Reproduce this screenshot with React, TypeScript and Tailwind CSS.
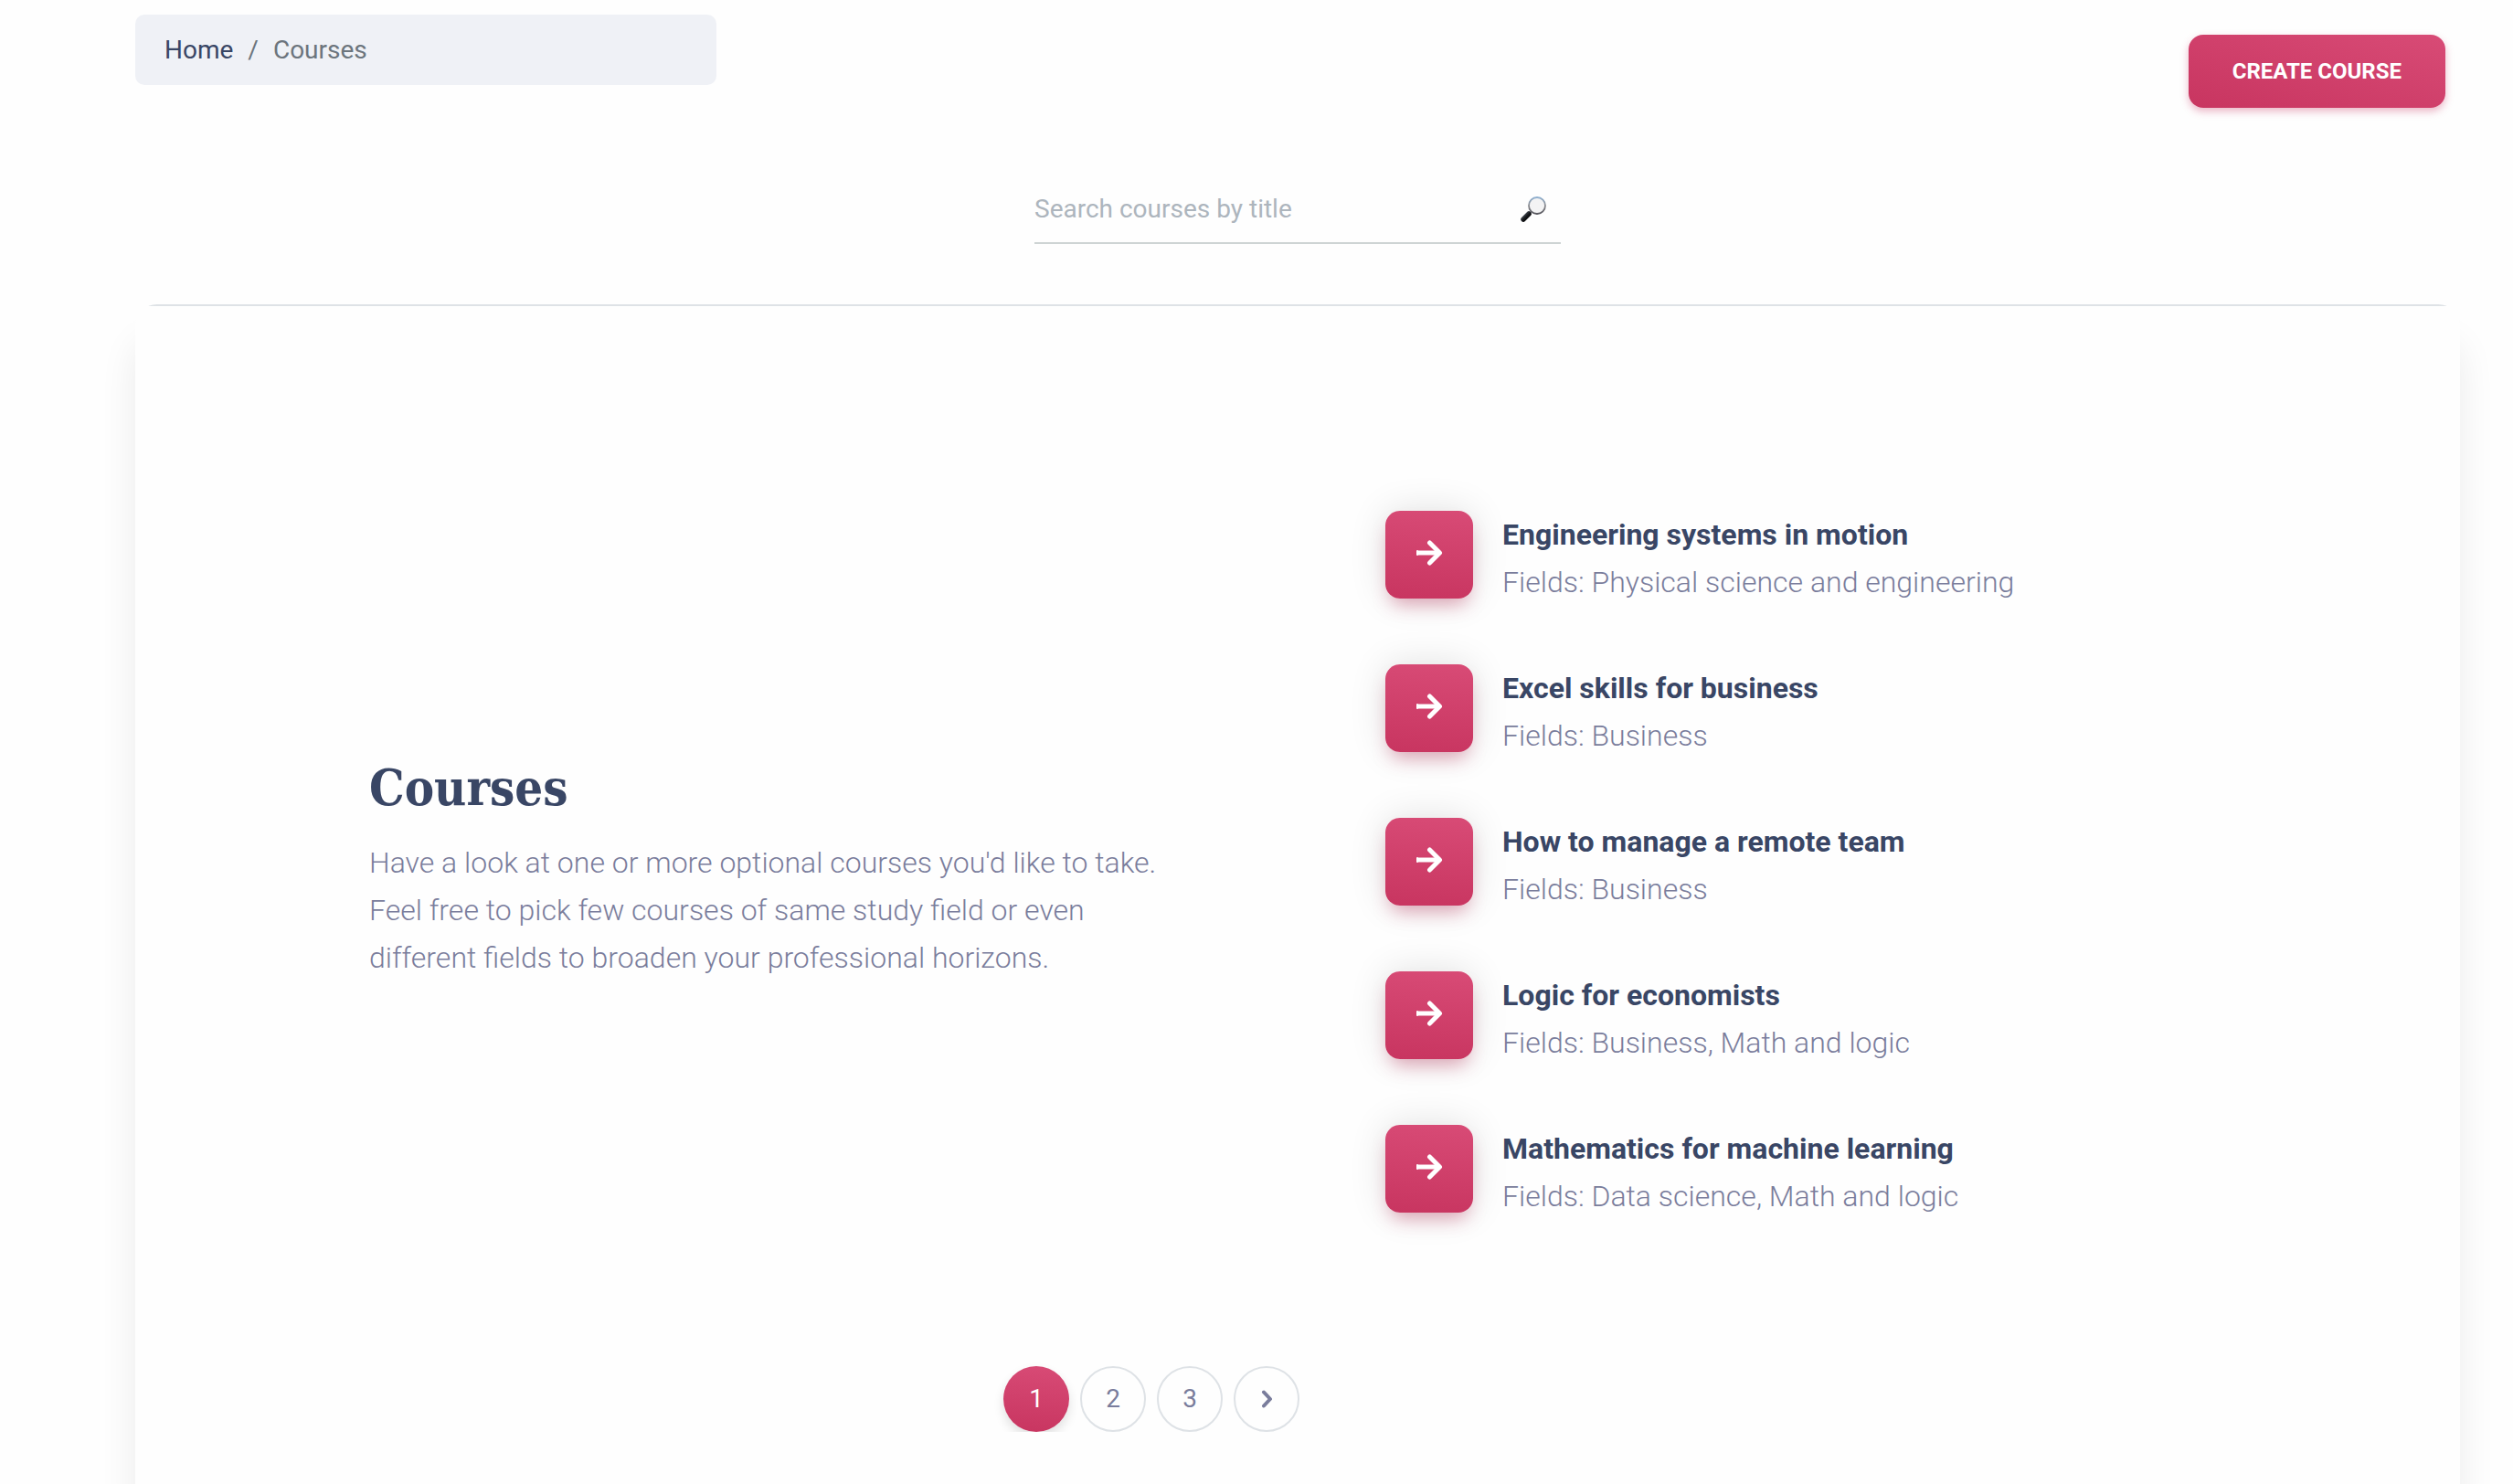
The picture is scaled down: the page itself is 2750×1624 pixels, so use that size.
import React from "react";

const courses = [
  { title: "Engineering systems in motion", fields: "Physical science and engineering" },
  { title: "Excel skills for business", fields: "Business" },
  { title: "How to manage a remote team", fields: "Business" },
  { title: "Logic for economists", fields: "Business, Math and logic" },
  { title: "Mathematics for machine learning", fields: "Data science, Math and logic" },
];

function ArrowIcon() {
  return (
    <svg viewBox="0 0 32 32" className="size-8" fill="none" stroke="currentColor" strokeWidth="5" strokeLinejoin="round" aria-hidden="true">
      <path d="M3 14H26" strokeLinecap="butt" />
      <path d="M16.5 3L27.5 14L16.5 25" strokeLinecap="round" />
      <path d="M3 12V16" strokeWidth="2" strokeLinecap="round" />
    </svg>
  );
}

function ChevronIcon() {
  return (
    <svg viewBox="0 0 24 24" className="size-6" fill="none" stroke="currentColor" strokeWidth="4" strokeLinecap="round" strokeLinejoin="round" aria-hidden="true">
      <path d="M9 4.5L16 12L9 19.5" />
    </svg>
  );
}

function MagnifierIcon() {
  return (
    <svg viewBox="0 0 28 28" className="size-7" aria-hidden="true">
      <defs>
        <linearGradient id="rim" x1="0" y1="0" x2="0" y2="1">
          <stop offset="0" stopColor="#8fb0d0" />
          <stop offset="0.5" stopColor="#8c8c90" />
          <stop offset="1" stopColor="#55555c" />
        </linearGradient>
        <linearGradient id="grip" x1="0" y1="0" x2="1" y2="1">
          <stop offset="0" stopColor="#5a6068" />
          <stop offset="0.5" stopColor="#16181c" />
          <stop offset="1" stopColor="#000000" />
        </linearGradient>
      </defs>
      <path d="M9 19L13 15" stroke="#9a9aa0" strokeWidth="2" />
      <path d="M3 25L9 19" stroke="url(#grip)" strokeWidth="5.5" strokeLinecap="round" />
      <circle cx="18" cy="10" r="9" fill="#f3f3f4" stroke="url(#rim)" strokeWidth="1.8" />
    </svg>
  );
}

const pageItem = "flex size-[72px] items-center justify-center rounded-full text-[28px] leading-none";

export default function App() {
  return (
    <div className="flex min-h-screen flex-col overflow-hidden bg-[#fefefe] pr-[58px] pl-[148px] font-[Roboto,sans-serif] text-[28px] text-[#7a7d9c]">
      <header className="flex items-start justify-between pt-4">
        <nav aria-label="Breadcrumb" className="w-1/4 rounded-[10px] bg-[#eff1f6] px-8 py-4">
          <ol className="flex gap-4 leading-[45px]">
            <li><a href="#home" className="text-[#394665]">Home</a></li>
            <li aria-hidden="true" className="text-[#6c757d]">/</li>
            <li aria-current="page" className="text-[#6c757d]">Courses</li>
          </ol>
        </nav>
        <button type="button" className="mt-[22px] mr-4 h-20 rounded-2xl bg-linear-[15deg,#c83560,#d84b76] px-12 text-2xl font-bold text-white shadow-[0_4px_8px_rgba(200,53,96,0.35)]">
          CREATE COURSE
        </button>
      </header>

      <form role="search" className="mx-auto mt-[74px] flex w-[576px] items-center border-b-2 border-[#ced4d4] pr-4">
        <input
          type="text"
          aria-label="Search courses by title"
          placeholder="Search courses by title"
          className="h-[73px] min-w-0 flex-1 bg-transparent outline-none placeholder:text-[#adb5bd]"
        />
        <button type="submit" aria-label="Search"><MagnifierIcon /></button>
      </form>

      <main className="mt-[66px] flex-1 rounded-t-3xl bg-[#fefefe] shadow-[0_40px_40px_rgba(0,0,0,0.08)]">
        <div className="h-full overflow-hidden rounded-t-3xl">
          <div className="border-t-2 border-[#dee2e6] px-64 pt-56">
            <div className="grid grid-cols-2 items-center gap-x-48">
              <section className="max-w-[900px]">
                <h1 className="mb-[14px] font-['DejaVu_Serif_Condensed','DejaVu_Serif',serif] text-[54px] leading-[84px] font-bold text-[#394665]">Courses</h1>
                <p className="text-[32px] leading-[52px] font-light">
                  Have a look at one or more optional courses you'd like to take. Feel free to pick few courses of same study field or even different fields to broaden your professional horizons.
                </p>
              </section>
              <ul className="flex flex-col gap-16">
                {courses.map((course) => (
                  <li key={course.title} className="flex items-start gap-8">
                    <a
                      href="#course"
                      aria-label={course.title}
                      className="flex size-24 shrink-0 items-center justify-center rounded-2xl bg-linear-[5deg,#c83560,#d84b76] text-white shadow-[0_0_40px_rgba(0,0,0,0.12),0_12px_20px_-6px_rgba(200,53,96,0.4)]"
                    >
                      <ArrowIcon />
                    </a>
                    <div className="text-[32px] leading-[52px]">
                      <h2 className="font-bold text-[#394665]">{course.title}</h2>
                      <p className="font-light">Fields: {course.fields}</p>
                    </div>
                  </li>
                ))}
              </ul>
            </div>
            <nav aria-label="Pagination" className="mt-40 mr-80 flex justify-center gap-3">
              <a href="#1" aria-current="page" className={pageItem + " bg-linear-[5deg,#c83560,#d84b76] text-white shadow-[0_6px_12px_rgba(0,0,0,0.12)]"}>1</a>
              <a href="#2" className={pageItem + " border-2 border-[#dee2e6]"}>2</a>
              <a href="#3" className={pageItem + " border-2 border-[#dee2e6]"}>3</a>
              <a href="#next" aria-label="Next" className={pageItem + " border-2 border-[#dee2e6]"}><ChevronIcon /></a>
            </nav>
          </div>
        </div>
      </main>
    </div>
  );
}
